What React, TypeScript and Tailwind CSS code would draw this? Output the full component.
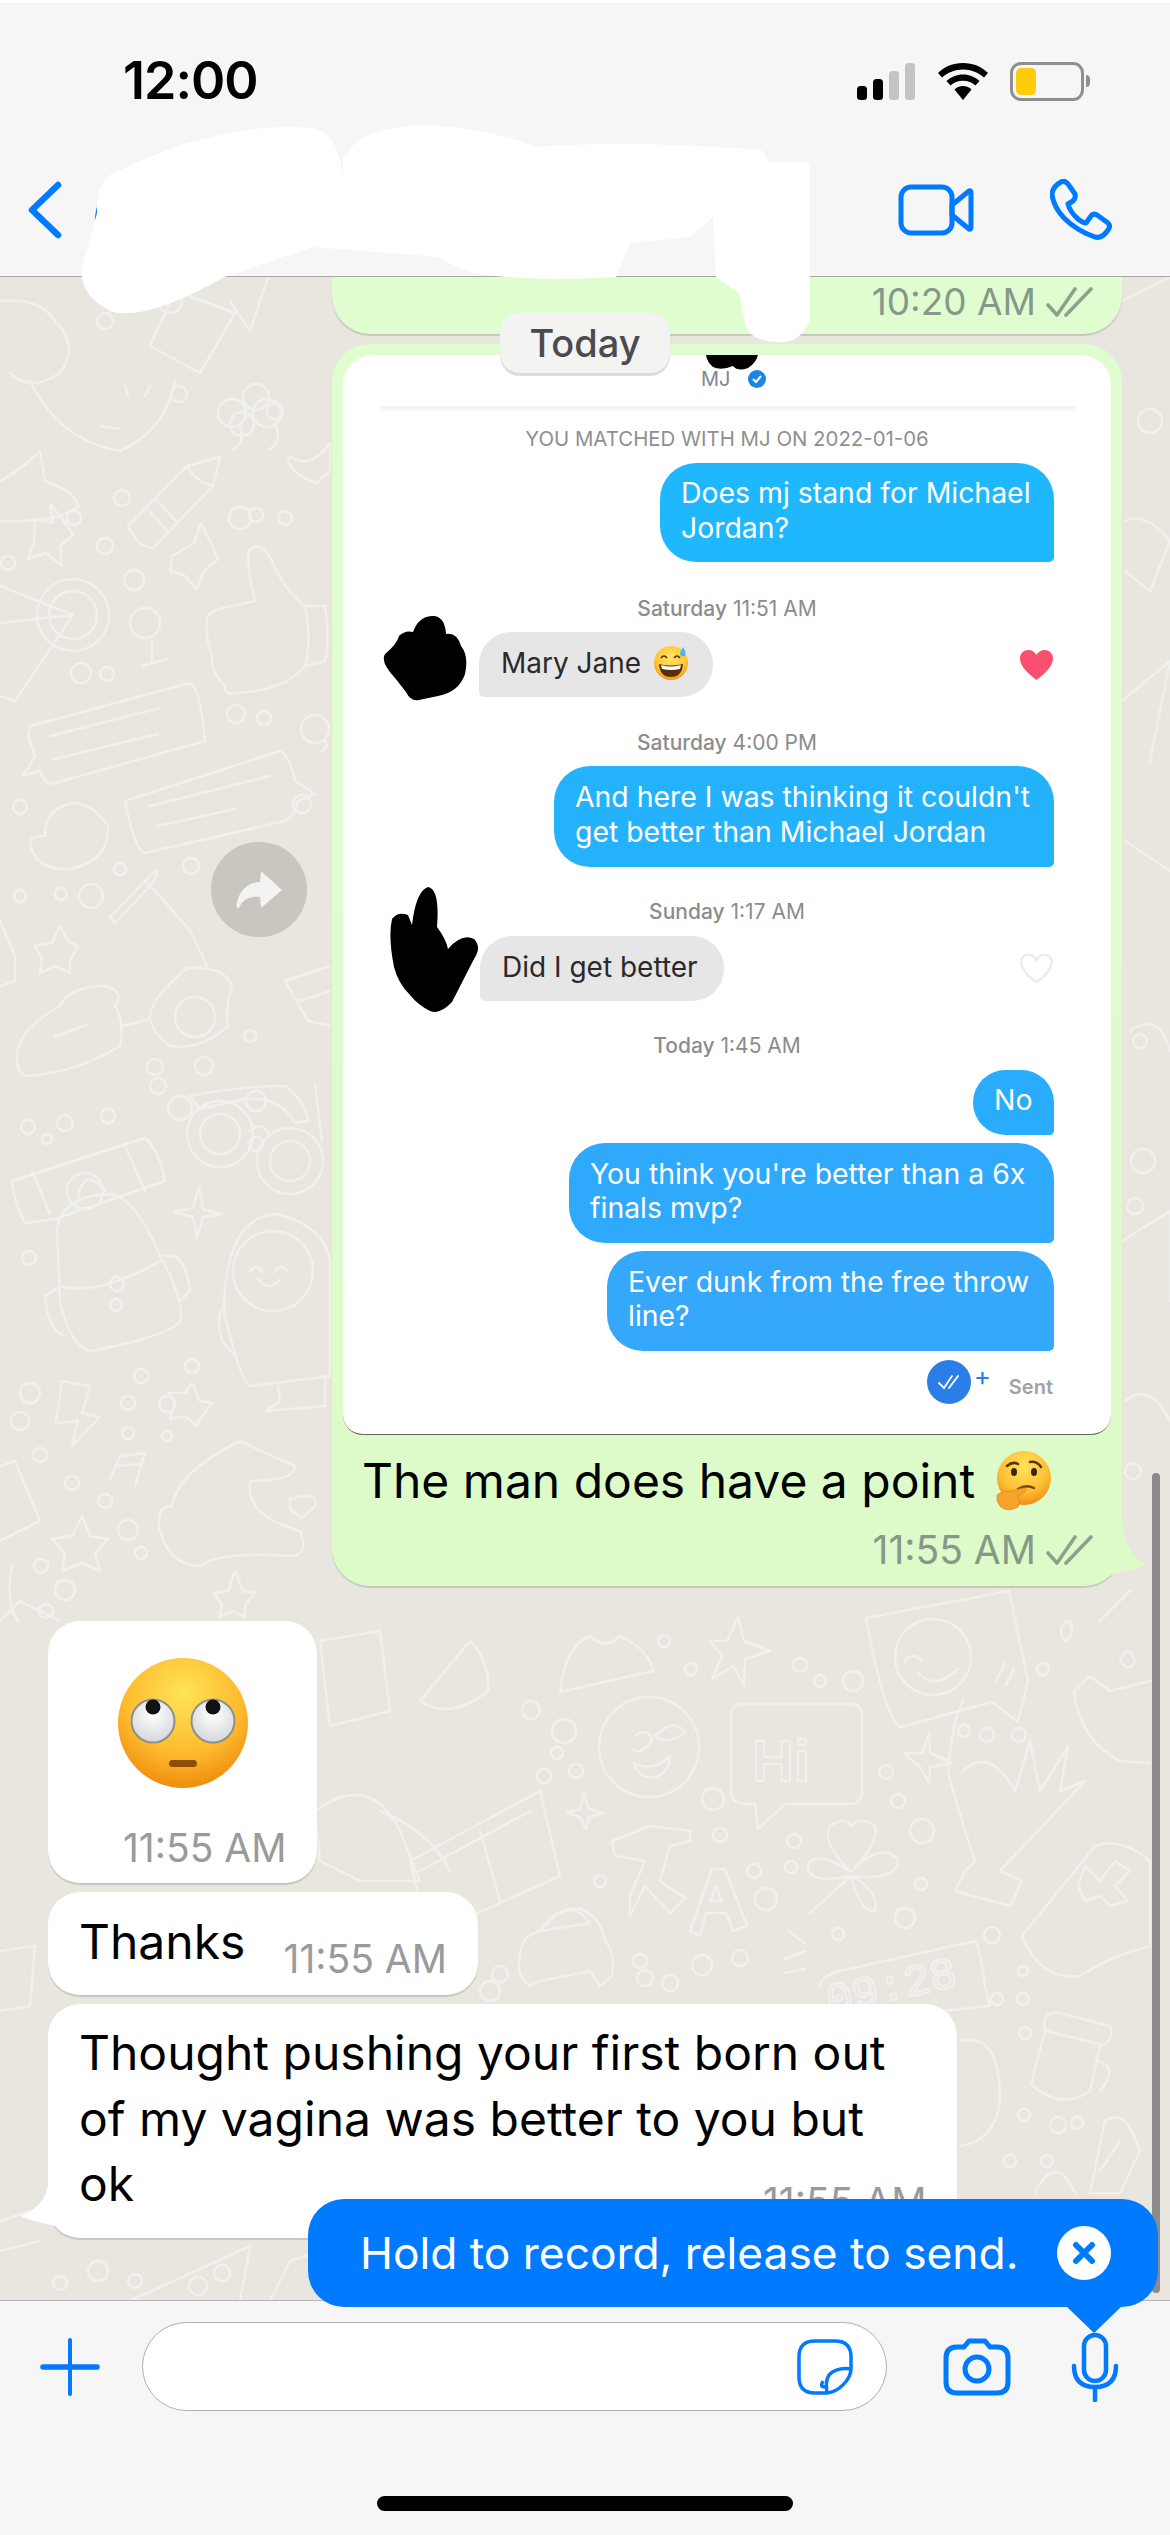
import React from "react";

const BLUE = "#007aff";

const circles: [number, number, number][] = [
  [105, 320, 8], [170, 300, 12], [256, 396, 13], [179, 393, 8], [242, 423, 12], [275, 410, 8], [122, 497, 8], [105, 545, 8],
  [74, 517, 7], [8, 562, 7], [134, 579, 10], [256, 514, 7], [240, 517, 11], [285, 517, 7], [81, 672, 10], [107, 673, 7], [236, 713, 9],
  [264, 717, 7], [302, 803, 9], [20, 806, 7], [120, 868, 6], [191, 865, 8], [61, 893, 6], [91, 895, 12], [20, 895, 6],
  [204, 1065, 9], [256, 1100, 10], [256, 1143, 7], [250, 1035, 6], [180, 1107, 12], [155, 1066, 8],
  [65, 1122, 8], [108, 1115, 7], [158, 1085, 8], [28, 1126, 7], [47, 1138, 5], [29, 1257, 7], [117, 1283, 7], [116, 1304, 6],
  [141, 1375, 7], [192, 1365, 7], [128, 1402, 7], [167, 1403, 8], [30, 1392, 10], [20, 1420, 9], [40, 1454, 7],
  [72, 1482, 7], [128, 1432, 6], [167, 1435, 5], [128, 1529, 10], [141, 1552, 6], [41, 1565, 7], [65, 1589, 10], [46, 1610, 7], [105, 1500, 7],
  [664, 1640, 6], [691, 1668, 6], [800, 1664, 7], [820, 1680, 6], [853, 1680, 10], [531, 1709, 9], [564, 1730, 12], [557, 1752, 6], [576, 1770, 7],
  [544, 1775, 7], [713, 1798, 11], [720, 1834, 7], [794, 1840, 7], [754, 1870, 7], [791, 1866, 6], [766, 1898, 11], [600, 1880, 6],
  [1043, 1668, 6], [1019, 1734, 7], [964, 1730, 6], [987, 1734, 7], [886, 1771, 7], [898, 1800, 7], [922, 1830, 12], [921, 1883, 6], [905, 1917, 10],
  [838, 1933, 6], [992, 1934, 8], [1023, 1970, 5], [997, 1998, 6], [1023, 1998, 6], [1025, 2032, 6], [1024, 2114, 6], [1058, 2124, 8], [1077, 2122, 6],
  [1010, 2160, 6], [1047, 2160, 6], [500, 1973, 8], [640, 1960, 7], [645, 1977, 8], [670, 1982, 8], [702, 1964, 10], [740, 1957, 8], [490, 1990, 10],
  [60, 2282, 7], [98, 2270, 10], [135, 2280, 7], [198, 2285, 9], [222, 2272, 8],
  [1150, 420, 12], [1140, 1040, 7], [1135, 1205, 8], [1143, 1160, 12], [1133, 1470, 8],
  [195, 1016, 20], [232, 412, 14], [267, 412, 14], [315, 728, 14],
];

const doodlePaths = [
  // left column, top to bottom
  "M0 300 Q40 296 55 320 Q80 345 60 372 Q30 392 10 372 M175 290 L235 312 L200 372 L150 345Z M250 330 L268 276 M250 330 L230 300",
  "M30 380 Q60 440 120 450 Q165 430 175 380 M100 425 L120 428 M125 385 L128 395 M145 395 L150 385",
  "M0 480 Q20 470 40 450 L45 480 Q75 490 78 505 Q60 522 0 520",
  "M290 455 Q310 470 330 442 L330 470 L316 482 Q295 475 288 460Z M240 425 Q246 440 234 448 M276 425 Q282 440 270 448 M325 740 Q330 745 322 750",
  "M128 525 L187 465 L220 456 L213 485 L153 547 Q140 548 128 525Z M146 506 L168 531 M155 498 L178 522 M187 465 Q195 480 213 485",
  "M35 518 L53 522 L50 503 L62 517 L73 534 L60 545 L62 565 L46 552 L28 558 L34 541Z",
  "M172 555 L194 542 L201 522 L211 542 L218 558 L204 570 L197 588 L184 574 L170 570Z",
  "M207 620 Q205 610 232 605 L255 600 Q245 560 250 548 Q262 540 272 560 Q285 590 305 605 L325 605 Q330 640 325 660 L305 665 Q285 690 235 692 Q225 695 225 685 Q210 670 212 655 Q205 635 207 620Z M305 605 Q312 640 305 665",
  "M0 585 L73 614 L15 700 L0 695 M0 622 L73 614",
  "M152 640 L152 660 M143 665 L167 658",
  "M30 725 L190 682 Q200 685 205 740 L55 782 Q45 785 40 770 L23 775 L35 755 L28 735Z M50 735 L160 707 M54 758 L158 733",
  "M125 800 L280 750 Q290 755 295 780 L315 793 L298 800 Q295 815 285 820 L145 852 Q135 850 125 800Z M150 805 L270 775 M158 825 L235 808",
  "M45 835 Q45 805 75 802 Q95 805 108 825 Q110 860 70 868 Q35 870 30 842 Q30 835 45 835Z",
  "M60 925 L68 940 L78 945 L70 960 L70 972 L55 965 L40 972 L42 958 L35 945 L52 942Z",
  "M0 920 L15 955 L15 980 L0 985",
  "M110 916 L155 870 Q160 875 150 885 L115 922 Z M145 880 Q170 905 190 930 L207 965",
  "M17 1058 Q15 1030 60 1005 Q70 985 105 985 Q125 990 115 1005 Q125 1020 120 1045 Q80 1070 30 1075 Q17 1075 17 1058Z M55 1036 L88 1023 M123 1025 L150 1018",
  "M150 1018 Q148 1000 187 967 Q225 965 232 985 Q225 1005 228 1025 Q200 1050 170 1045 Q155 1035 150 1018Z",
  "M285 980 L330 965 M285 980 L308 1020 L330 1025 M300 1000 L330 990",
  // glasses, bags
  "M190 1095 Q240 1085 285 1085 Q305 1100 308 1120 L295 1122 Q280 1095 245 1098 L200 1108Z M250 1130 Q262 1118 270 1135 M315 1085 L322 1140",
  "M12 1180 L145 1137 Q160 1150 165 1180 L55 1218 L25 1222 Q15 1205 12 1180Z M32 1170 L50 1213 M125 1145 L145 1190",
  "M57 1230 Q60 1195 110 1193 Q135 1195 160 1255 Q185 1300 180 1320 Q170 1335 90 1350 Q70 1345 60 1300 Z M60 1285 Q100 1295 160 1260 M60 1285 L45 1295 Q48 1330 65 1335 M165 1255 Q185 1250 190 1290 L180 1300 M78 1195 Q85 1165 105 1190",
  "M199 1185 L203 1208 L222 1213 L203 1216 L197 1237 L193 1216 L174 1211 L193 1207Z",
  "M224 1310 Q225 1215 277 1213 Q325 1225 330 1260 L330 1375 L250 1385 Q240 1380 224 1310Z M225 1305 Q215 1310 222 1340 L235 1355 M250 1270 Q256 1262 262 1270 M275 1270 Q281 1262 288 1270 M258 1278 Q270 1292 280 1278 M278 1385 L280 1400 L266 1410 L325 1405 L325 1375",
  "M62 1380 L90 1385 L82 1412 L100 1416 L72 1445 L78 1420 L56 1422Z",
  "M192 1382 L200 1400 L212 1402 L200 1418 L197 1425 L185 1415 L170 1418 L175 1400 L168 1392 L185 1392Z",
  "M120 1455 L145 1452 L135 1485 M120 1455 L110 1478 M118 1465 L140 1463",
  "M172 1505 Q178 1470 240 1440 Q265 1452 295 1465 Q295 1480 250 1480 Q245 1515 300 1530 Q310 1555 290 1555 Q220 1550 200 1565 Q170 1565 160 1530 Q155 1505 172 1505Z",
  "M290 1498 Q302 1495 304 1495 Q318 1495 315 1505 L302 1517 L290 1508Z",
  "M0 1465 L15 1460 L40 1520 L0 1540",
  "M82 1515 L90 1535 L108 1538 L95 1552 L100 1570 L82 1562 L62 1570 L65 1552 L52 1538 L72 1535Z",
  "M12 1565 Q5 1600 18 1620",
  "M235 1570 L243 1590 L255 1592 L245 1604 L245 1616 L233 1610 L220 1616 L222 1604 L214 1592 L228 1590Z",
  // bottom area left
  "M0 1620 L20 1600 L60 1620 M0 1950 L35 1945 L30 2005 L0 2010 M0 2220 L30 2210 M0 2250 L40 2240 M130 2300 L250 2245 L240 2300",
  "M270 2300 L290 2260 L320 2250",
  "M320 1640 L380 1630 L390 1710 L330 1725Z M315 1810 Q370 1770 400 1830 L420 1880 L360 1880 L320 1860Z",
  "M420 1700 L470 1640 Q490 1660 488 1690 Q450 1720 420 1700 M380 1810 Q430 1830 450 1870",
  // map
  "M410 1860 L540 1790 L560 1875 L460 1920 L420 1900Z M480 1830 L500 1900 M420 1870 L530 1810",
  // bottom-right field
  "M560 1691 Q565 1645 590 1635 Q605 1650 620 1635 Q650 1650 653 1670Z",
  "M710 1640 L727 1640 L738 1616 L744 1640 L770 1650 L745 1658 L744 1684 L733 1665 L712 1678 L722 1655Z",
  "M866 1617 L1009 1590 L1028 1680 L1018 1721 L992 1701 L901 1726 Q885 1720 866 1617Z M905 1660 Q912 1650 922 1660 M918 1672 Q935 1690 958 1668 M996 1680 L1005 1662 M1006 1684 L1014 1668",
  "M635 1735 Q650 1725 652 1740 Q640 1755 632 1748 M655 1735 Q675 1715 685 1732 Q665 1745 655 1735 M634 1762 Q652 1772 670 1755 Q668 1778 648 1776 Q638 1775 634 1762Z",
  "M745 1703 L850 1703 Q862 1703 862 1715 L862 1790 Q862 1803 850 1803 L785 1803 L758 1828 L755 1803 L745 1803 Q731 1803 731 1790 L731 1715 Q731 1703 745 1703Z",
  "M584 1792 L589 1808 L604 1812 L589 1816 L586 1828 L580 1816 L567 1812 L580 1808Z",
  "M929 1732 L930 1752 L952 1762 L930 1766 L929 1782 L920 1766 L904 1752 L922 1752Z",
  "M851 1871 Q820 1840 830 1825 Q845 1815 851 1825 Q860 1815 875 1825 Q880 1840 851 1871 Q880 1840 898 1858 Q900 1880 851 1875 Q880 1890 875 1910 Q860 1912 851 1875 M851 1871 Q820 1850 808 1862 Q805 1885 851 1875 L810 1912",
  "M612 1840 L650 1825 L690 1830 L690 1840 L670 1845 L660 1880 L685 1897 L670 1912 L645 1885 L630 1915 L630 1895 L645 1860 L615 1855Z",
  "M690 1930 L712 1868 L725 1868 L747 1925 L733 1930 L726 1912 L706 1912 L700 1935Z M710 1900 L722 1900 L716 1885Z",
  "M520 1955 Q520 1935 540 1930 Q555 1905 580 1908 Q600 1915 605 1940 Q615 1950 612 1975 L600 1985 L590 1970 L540 1980 L530 1985 Q515 1975 520 1955Z M540 1930 L590 1922 M545 1925 Q570 1895 590 1922",
  "M788 1930 L805 1942 M785 1958 L805 1950 M785 1972 L805 1968",
  "M820 1985 Q820 1975 840 1970 L975 1940 Q980 1945 985 1985 L990 2005 L850 2020",
  "M963 1700 Q952 1720 948 1770 Q955 1800 975 1860 L965 1870 L955 1890 L1010 1905 L1022 1880 L1000 1870 L1085 1780 L1060 1790 L1068 1745 L1040 1790 L1030 1740 L1015 1790 Q990 1745 963 1770",
  "M1022 1935 L1095 1845 Q1120 1835 1150 1860 L1150 1945 Q1110 1955 1080 1975 Q1040 1980 1022 1935Z M1085 1865 L1100 1880 L1115 1860 L1130 1870 L1115 1885 L1128 1900 L1110 1905 L1100 1895 L1085 1900 L1078 1885Z",
  "M1074 1690 L1090 1675 L1110 1690 L1150 1680 M1074 1690 Q1080 1740 1120 1760 L1150 1762",
  "M1031 2083 L1045 2030 Q1040 2010 1060 2012 L1110 2025 Q1115 2040 1100 2045 L1090 2090 Q1060 2110 1031 2083Z M1047 2030 L1102 2044 M1097 2060 Q1120 2065 1100 2090",
  "M960 2040 Q1000 2030 1000 2100 Q995 2140 960 2145",
  "M1090 2192 L1105 2120 Q1125 2105 1140 2150 L1120 2192Z M1100 2170 L1120 2140",
  "M1035 2192 Q1055 2150 1075 2192 M980 2290 Q1000 2240 1020 2270",
  "M1100 1620 L1130 1590 M1120 1660 Q1128 1640 1135 1660 Q1130 1672 1120 1660Z M1065 1640 Q1055 1625 1070 1620 Q1075 1635 1065 1640Z",
  "M1122 300 L1170 276 M1125 520 Q1145 510 1170 540 L1150 590 L1125 570 M1122 700 L1170 660 L1150 760 M1125 840 L1170 870 M1130 1030 Q1160 1010 1170 1050 M1122 1240 L1170 1210 L1170 1300 M1125 1400 Q1150 1380 1170 1420",
];

function Doodles() {
  return (
    <svg viewBox="0 276 1170 2024" className="absolute left-0 top-0 h-[2024px] w-[1170px]" fill="none" stroke="#f2f0ec" strokeWidth="2.5" strokeLinecap="round" strokeLinejoin="round">
      {doodlePaths.map((d, i) => <path key={i} d={d} />)}
      {circles.map(([cx, cy, r], i) => <circle key={i} cx={cx} cy={cy} r={r} />)}
      <circle cx="73" cy="614" r="36" />
      <circle cx="73" cy="614" r="24" />
      <circle cx="145" cy="622" r="15" />
      <circle cx="220" cy="1133" r="33" /><circle cx="220" cy="1133" r="20" />
      <circle cx="290" cy="1160" r="33" /><circle cx="290" cy="1160" r="20" />
      <circle cx="933" cy="1656" r="38" />
      <circle cx="649" cy="1746" r="50" />
      <circle cx="273" cy="1270" r="40" />
      <circle cx="85" cy="1190" r="18" />
      <text x="752" y="1780" fontFamily="Liberation Sans, sans-serif" fontWeight="700" fontSize="58" strokeWidth="2">Hi</text>
      <text x="830" y="2014" fontFamily="Liberation Mono, monospace" fontSize="44" strokeWidth="2" transform="rotate(-13 830 2014)">09:28</text>
    </svg>
  );
}

function Signal() {
  return (
    <svg width="59" height="37" viewBox="0 0 59 37">
      <rect x="0" y="23" width="10" height="14" rx="3.5" fill="#000" />
      <rect x="16" y="16" width="10" height="21" rx="3.5" fill="#000" />
      <rect x="32" y="8" width="10" height="29" rx="3.5" fill="#c4c4c4" />
      <rect x="48" y="0" width="10" height="37" rx="3.5" fill="#c4c4c4" />
    </svg>
  );
}

function Wifi() {
  return (
    <svg width="50" height="37" viewBox="0 0 50 37">
      <path d="M25 0C15 0 6.500 3.500 0 10L4 14.500C9.500 9.500 17 6.500 25 6.500C33 6.500 40.500 9.500 46 14.500L50 10C43.500 3.500 35 0 25 0Z" fill="#000" />
      <path d="M25 11.500C18.500 11.500 13 14 8.500 18L12.500 22.500C15.800 19.500 20 17.800 25 17.800C30 17.800 34.200 19.500 37.500 22.500L41.500 18C37 14 31.500 11.500 25 11.500Z" fill="#000" />
      <path d="M25 23C21.500 23 18.500 24.300 16.500 26.500L25 37L33.500 26.500C31.500 24.300 28.500 23 25 23Z" fill="#000" />
    </svg>
  );
}

function Battery() {
  return (
    <div className="flex items-center">
      <div className="flex h-[39px] w-[74px] items-center rounded-[11px] border-[3px] border-[#8f8f8f] pl-[3px]">
        <div className="h-[27px] w-[20px] rounded-[5px] bg-[#ffcc0a]" />
      </div>
      <div className="ml-[2px] h-[12px] w-[4px] rounded-r-full bg-[#8f8f8f]" />
    </div>
  );
}

function CheckMarks({ color = "#8ea28b" }: { color?: string }) {
  return (
    <svg width="47" height="32" viewBox="0 0 47 32" fill="none" stroke={color} strokeWidth="3.600" strokeLinecap="round" strokeLinejoin="round">
      <path d="M2 19L11 29L29 3" />
      <path d="M20 29L45 3" />
    </svg>
  );
}

function Tail({ side }: { side: "left" | "right" }) {
  if (side === "right") {
    return (
      <svg className="absolute bottom-[8px] left-[768px] h-[60px] w-[50px]" viewBox="0 0 50 60">
        <path d="M0 0L22 0C24 22 30 40 47 47C35 52 20 52 6 60L0 60Z" fill="#dcfbc8" />
      </svg>
    );
  }
  return (
    <svg className="absolute bottom-[10px] left-[-27px] h-[56px] w-[40px]" viewBox="0 0 40 56">
      <path d="M40 0L28 0C28 25 20 35 0 44C10 50 22 50 40 56Z" fill="#fff" />
    </svg>
  );
}

function SweatSmile() {
  return (
    <svg width="34" height="34" viewBox="0 0 34 34">
      <defs>
        <radialGradient id="ss" cx="50%" cy="35%" r="65%">
          <stop offset="0%" stopColor="#ffe766" />
          <stop offset="70%" stopColor="#fdc433" />
          <stop offset="100%" stopColor="#ef9a12" />
        </radialGradient>
      </defs>
      <circle cx="17" cy="17" r="17" fill="url(#ss)" />
      <path d="M7 12Q10 8 13 12M20 12Q23 8 26 12" fill="none" stroke="#5a3410" strokeWidth="1.700" />
      <path d="M5 18Q17 21 29 18Q28 31 17 31Q6 31 5 18Z" fill="#5a2c0c" />
      <path d="M7 19Q17 22 27 19L26 23Q17 25 8 23Z" fill="#fff" />
      <path d="M29 1Q33 7 31 10Q28 11 26 9Q26 6 29 1Z" fill="#4fb4ef" />
    </svg>
  );
}

function Thinking() {
  return (
    <svg width="60" height="60" viewBox="0 0 60 60">
      <defs>
        <radialGradient id="th" cx="50%" cy="30%" r="70%">
          <stop offset="0%" stopColor="#ffe35c" />
          <stop offset="65%" stopColor="#fdbf33" />
          <stop offset="100%" stopColor="#ef8f13" />
        </radialGradient>
      </defs>
      <circle cx="31" cy="27" r="27" fill="url(#th)" />
      <path d="M14 15Q20 10 25 13M37 11Q44 10 48 16" fill="none" stroke="#5a3410" strokeWidth="2.500" strokeLinecap="round" />
      <ellipse cx="21" cy="21" rx="3" ry="4" fill="#3d2410" />
      <ellipse cx="41" cy="21" rx="3" ry="4" fill="#3d2410" />
      <path d="M25 38Q33 33 41 37" fill="none" stroke="#7a4512" strokeWidth="2.500" strokeLinecap="round" />
      <path d="M4 44Q10 39 18 40L31 37Q35 38 32 41L25 45Q28 50 25 56Q14 62 7 55Q3 50 4 44Z" fill="#f7a22b" stroke="#e2861a" strokeWidth="0.800" />
    </svg>
  );
}

function RollingEyes() {
  return (
    <svg width="130" height="132" viewBox="0 0 130 132">
      <defs>
        <radialGradient id="re" cx="50%" cy="28%" r="72%">
          <stop offset="0%" stopColor="#ffe455" />
          <stop offset="65%" stopColor="#fdb92e" />
          <stop offset="100%" stopColor="#ee8d0d" />
        </radialGradient>
        <radialGradient id="eye" cx="50%" cy="35%" r="60%">
          <stop offset="0%" stopColor="#fff" />
          <stop offset="100%" stopColor="#d9dade" />
        </radialGradient>
      </defs>
      <circle cx="65" cy="66" r="65" fill="url(#re)" />
      <circle cx="35" cy="64" r="21.500" fill="url(#eye)" stroke="#8d8f8f" strokeWidth="2" />
      <circle cx="95" cy="64" r="21.500" fill="url(#eye)" stroke="#8d8f8f" strokeWidth="2" />
      <circle cx="35" cy="50" r="7.500" fill="#111" />
      <circle cx="95" cy="50" r="7.500" fill="#111" />
      <rect x="51" y="103" width="28" height="7" rx="3.500" fill="#8a4f05" />
    </svg>
  );
}

function TinderBubble({ children, width, height, color }: { children: React.ReactNode; width: string; height: string; color: string }) {
  return (
    <div className={`${width} ${height} ${color} self-end mr-[57px] flex flex-col justify-center rounded-[36px] rounded-br-[5px] pb-[4px] pl-[21px] text-[28.400px] leading-[34.500px] text-white`}>
      {children}
    </div>
  );
}

function Stamp({ children, mt }: { children: React.ReactNode; mt: string }) {
  return <div className={`${mt} h-[22px] text-center text-[21px] leading-[22px] text-[#8c8c8c]`}>{children}</div>;
}

function TinderShot() {
  return (
    <div className="relative mx-[11px] mt-[11px] flex h-[1080px] flex-col overflow-hidden rounded-t-[30px] rounded-b-[20px] border-b border-[#666] bg-white">
      <svg className="absolute left-[363px] top-0 h-[17px] w-[52px]" viewBox="0 0 52 17">
        <path d="M0 0L52 0Q50 8 42 13Q32 17 27 11Q15 16 7 12Q1 7 0 0Z" fill="#000" />
      </svg>
      <div className="mt-[14px] flex h-[20px] items-center pl-[358px] text-[20px] leading-[20px] text-[#858585]">
        MJ
        <svg className="ml-[18px]" width="18" height="18" viewBox="0 0 18 18">
          <circle cx="9" cy="9" r="9" fill="#1a86e4" />
          <path d="M5 9L8 12L13 6" fill="none" stroke="#fff" strokeWidth="2" />
        </svg>
      </div>
      <div className="mx-[36px] mt-[17px] h-[7px] bg-gradient-to-b from-[#f0f0f0] to-white" />
      <div className="mt-[14px] h-[24px] text-center text-[20.400px] leading-[24px] text-[#8f8f8f]">YOU MATCHED WITH MJ ON 2022-01-06</div>

      <div className="mt-[12px] flex flex-col">
        <TinderBubble width="w-[394px]" height="h-[99px]" color="bg-[#1fb8fe]">
          <span>Does mj stand for Michael</span>
          <span>Jordan?</span>
        </TinderBubble>
      </div>
      <Stamp mt="mt-[36px]"><b className="font-medium">Saturday</b> 11:51 AM</Stamp>
      <div className="relative mt-[12px] flex h-[65px] items-center pl-[136px] pr-[58px]">
        <svg className="absolute left-[40px] top-[-16px] h-[85px] w-[85px]" viewBox="0 0 85 85">
          <path d="M52 0Q62 2 63 18Q74 16 78 30Q86 40 82 58Q76 76 55 80L36 84Q28 86 23 76L12 62Q-3 46 2 38Q14 28 16 20Q22 14 30 16Q36 -1 52 0Z" fill="#000" />
        </svg>
        <div className="flex h-[65px] w-[234px] items-center gap-[13px] rounded-[32px] rounded-bl-[5px] bg-[#e6e6e6] pb-[4px] pl-[22px] text-[28px] text-[#2a2a2a]">
          Mary Jane
          <SweatSmile />
        </div>
        <svg className="ml-auto" width="33" height="30" viewBox="0 0 33 30">
          <path d="M16.500 30C10 25 0 17 0 8.500C0 3 4 0 8.500 0C12 0 15 2 16.500 5C18 2 21 0 24.500 0C29 0 33 3 33 8.500C33 17 23 25 16.500 30Z" fill="#f9506f" />
        </svg>
      </div>
      <Stamp mt="mt-[35px]"><b className="font-medium">Saturday</b> 4:00 PM</Stamp>
      <div className="mt-[12px] flex flex-col">
        <TinderBubble width="w-[500px]" height="h-[101px]" color="bg-[#25b2fd]">
          <span>And here I was thinking it couldn't</span>
          <span>get better than Michael Jordan</span>
        </TinderBubble>
      </div>
      <Stamp mt="mt-[34px]"><b className="font-medium">Sunday</b> 1:17 AM</Stamp>
      <div className="relative mt-[13px] flex h-[65px] items-center pl-[137px] pr-[58px]">
        <svg className="absolute left-[47px] top-[-49px] h-[126px] w-[89px]" viewBox="0 0 89 126">
          <path d="M38 0Q50 2 47 40Q56 52 58 62Q72 46 84 52Q92 60 84 72L62 115Q50 128 40 124Q28 118 20 108Q8 96 4 80Q-2 50 2 32Q8 24 18 28L22 38Q26 4 38 0Z" fill="#000" />
        </svg>
        <div className="flex h-[65px] w-[244px] items-center rounded-[32px] rounded-bl-[5px] bg-[#e6e6e6] pb-[4px] pl-[22px] text-[28px] text-[#2a2a2a]">Did I get better</div>
        <svg className="ml-auto" width="33" height="31" viewBox="0 0 33 30">
          <path d="M16.500 28.500C10 24 1.200 17 1.200 8.500C1.200 4 4.500 1.200 8.500 1.200C12 1.200 15 3 16.500 6.500C18 3 21 1.200 24.500 1.200C28.500 1.200 31.800 4 31.800 8.500C31.800 17 23 24 16.500 28.500Z" fill="none" stroke="#ececec" strokeWidth="2.400" />
        </svg>
      </div>
      <Stamp mt="mt-[34px]"><b className="font-medium">Today</b> 1:45 AM</Stamp>
      <div className="mt-[13px] flex flex-col gap-[8px]">
        <TinderBubble width="w-[81px]" height="h-[65px]" color="bg-[#28acfb]">
          <span>No</span>
        </TinderBubble>
        <TinderBubble width="w-[485px]" height="h-[100px]" color="bg-[#2ea9fb]">
          <span>You think you're better than a 6x</span>
          <span>finals mvp?</span>
        </TinderBubble>
        <TinderBubble width="w-[447px]" height="h-[100px]" color="bg-[#35a8fc]">
          <span>Ever dunk from the free throw</span>
          <span>line?</span>
        </TinderBubble>
      </div>
      <div className="mt-[9px] flex h-[44px] items-start justify-end pr-[58px]">
        <div className="flex h-[44px] w-[44px] items-center justify-center rounded-full bg-[#2b7de8]">
          <svg width="22" height="16" viewBox="0 0 22 16" fill="none" stroke="#fff" strokeWidth="1.800" strokeLinecap="round">
            <path d="M1 9L6 14L14 2M11 14L20 2" />
          </svg>
        </div>
        <div className="ml-[3px] mt-[3px] text-[26px] leading-[26px] text-[#2b7de8]">+</div>
        <div className="ml-[18px] mt-[15px] text-[20px] font-semibold leading-[24px] text-[#a2a2a2]">Sent</div>
      </div>
    </div>
  );
}

function WhiteBubble({ children, className }: { children: React.ReactNode; className: string }) {
  return <div className={`ml-[48px] rounded-[32px] bg-white shadow-[0_2px_1px_rgba(0,0,0,0.14)] ${className}`}>{children}</div>;
}

export default function App() {
  return (
    <div className="relative flex h-[2535px] w-[1170px] flex-col overflow-hidden bg-[#f6f6f6] font-[Inter,sans-serif]">
      <header className="flex h-[277px] shrink-0 flex-col border-t-[3px] border-b border-t-white border-b-[#a8a8a8] bg-[#f6f6f6]">
        <div className="mt-[48px] flex h-[60px] items-center pl-[123px] pr-[80px]">
          <span className="text-[52px] font-semibold leading-[60px] tracking-[-1px] text-black">12:00</span>
          <div className="ml-auto flex items-center gap-[22px]">
            <Signal />
            <Wifi />
            <Battery />
          </div>
        </div>
        <div className="mt-[66px] flex h-[66px] items-center pl-[28px] pr-[58px]">
          <svg width="34" height="58" viewBox="0 0 34 58" fill="none" stroke={BLUE} strokeWidth="6.500" strokeLinecap="round" strokeLinejoin="round">
            <path d="M30 4L4 29L30 54" />
          </svg>
          <svg className="ml-[30px]" width="20" height="40" viewBox="0 0 20 40" fill="none" stroke={BLUE} strokeWidth="5" strokeLinecap="round">
            <path d="M6 36Q3 20 14 4" />
          </svg>
          <svg className="ml-auto" width="76" height="52" viewBox="0 0 76 52" fill="none" stroke={BLUE} strokeWidth="5" strokeLinejoin="round">
            <rect x="3" y="3" width="51" height="46" rx="10" />
            <path d="M54 21L71 7Q73 6 73 9L73 43Q73 46 71 45L54 31Z" />
          </svg>
          <svg className="ml-[76px]" width="62" height="62" viewBox="0 0 62 62" fill="none" stroke={BLUE} strokeWidth="5" strokeLinejoin="round">
            <path d="M11 3Q15 1 18 5L25 15Q26 19 23 22L18 25Q20 33 28 40Q33 44 36 44L41 37Q43 34 47 36L58 44Q61 47 58 51Q52 60 45 58Q27 52 14 39Q3 27 2 15Q3 7 11 3Z" />
          </svg>
        </div>
      </header>

      <main className="relative h-[2023px] shrink-0 overflow-hidden bg-[#e9e6e0]">
        <Doodles />
        <div className="relative flex flex-col">
          <div className="ml-[332px] flex h-[57px] w-[790px] items-center justify-end gap-[10px] rounded-b-[38px] bg-[#e0fdd0] pb-[8px] pr-[29px] shadow-[0_2px_1px_rgba(0,0,0,0.14)]">
            <span className="text-[37px] leading-[42px] text-[#87988a]">10:20 AM</span>
            <CheckMarks />
          </div>

          <div className="relative ml-[332px] mt-[10px] flex h-[1242px] w-[790px] flex-col rounded-[38px] bg-gradient-to-b from-[#e0fdd0] to-[#dcfbc8] shadow-[0_2px_1px_rgba(0,0,0,0.14)]">
            <TinderShot />
            <div className="mt-[16px] flex h-[60px] items-center pl-[30px] text-[48px] leading-[60px] text-black">
              The man does have a point
              <span className="ml-[18px]"><Thinking /></span>
            </div>
            <div className="mt-[21px] flex h-[36px] items-center justify-end gap-[10px] pr-[29px]">
              <span className="text-[39px] leading-[42px] text-[#87988a]">11:55 AM</span>
              <CheckMarks />
            </div>
            <Tail side="right" />
          </div>

          <WhiteBubble className="mt-[35px] flex h-[262px] w-[269px] flex-col">
            <div className="mt-[36px] pl-[70px]"><RollingEyes /></div>
            <div className="mt-[41px] pl-[75px] text-[39px] leading-[36px] text-[#9a9a9a]">11:55 AM</div>
          </WhiteBubble>
          <WhiteBubble className="relative mt-[9px] h-[103px] w-[430px]">
            <div className="flex h-[103px] items-start pl-[31px]">
              <span className="mt-[20px] text-[48px] leading-[60px] text-black">Thanks</span>
              <span className="ml-auto mr-[31px] mt-[49px] text-[39px] leading-[36px] text-[#9a9a9a]">11:55 AM</span>
            </div>
          </WhiteBubble>
          <WhiteBubble className="relative mt-[9px] h-[234px] w-[909px] pl-[31px] pt-[16px]">
            <p className="text-[48px] leading-[65.500px] text-black">
              Thought pushing your first born out
              <br />
              of my vagina was better to you but
              <br />
              ok
            </p>
            <span className="absolute left-[715px] top-[180px] text-[39px] leading-[36px] text-[#9a9a9a]">11:55 AM</span>
            <Tail side="left" />
          </WhiteBubble>
        </div>

        <div className="absolute left-[500px] top-[36px] flex h-[60px] w-[170px] items-center justify-center rounded-[20px] bg-[#f3f3f2] text-[38px] font-medium text-[#4a4a4f] shadow-[0_3px_1px_rgba(0,0,0,0.14)]">
          Today
        </div>
        <div className="absolute left-[211px] top-[565px] flex h-[95px] w-[96px] items-center justify-center rounded-full bg-[#c9c5bf]">
          <svg width="46" height="38" viewBox="0 0 46 38">
            <path d="M25 0L46 19L25 37L24 26C14 25 6 29 3 37C0 38 0 35 1 31C4 19 13 11 24 11Z" fill="#f4f3f1" />
          </svg>
        </div>
        <div className="absolute left-[1152px] top-[1196px] h-[820px] w-[8px] rounded-full bg-[#8b8b8b]" />
      </main>

      <footer className="flex flex-1 flex-col border-t border-[#b4b4b4]">
        <div className="mt-[21px] flex h-[89px] items-center pl-[40px]">
          <svg width="60" height="60" viewBox="0 0 60 60" stroke={BLUE} strokeLinecap="round">
            <path d="M3 30L57 30" strokeWidth="5.500" />
            <path d="M30 3L30 57" strokeWidth="4" />
          </svg>
          <div className="ml-[42px] flex h-[89px] w-[745px] items-center justify-end rounded-full border border-[#b0b0b0] bg-white pr-[33px]">
            <svg width="56" height="56" viewBox="0 0 56 56" fill="none" stroke={BLUE} strokeWidth="3.500" strokeLinejoin="round">
              <path d="M18 2L38 2Q54 2 54 18L54 30C54 40 42 53 30 54L18 54Q2 54 2 38L2 18Q2 2 18 2Z" />
              <path d="M54 30Q40 28 32 36Q28 42 30 54M30 47Q22 50 26 42" />
            </svg>
          </div>
          <svg className="ml-[56px]" width="68" height="58" viewBox="0 0 68 58" fill="none" stroke={BLUE} strokeWidth="5" strokeLinejoin="round">
            <path d="M14 9L21 9L26 3L42 3L47 9L54 9Q65 9 65 20L65 44Q65 55 54 55L14 55Q3 55 3 44L3 20Q3 9 14 9Z" />
            <circle cx="34" cy="31" r="12" />
          </svg>
          <svg className="ml-[60px]" width="48" height="70" viewBox="0 0 48 70" fill="none" stroke={BLUE} strokeWidth="4.500" strokeLinecap="round">
            <rect x="13" y="3" width="22" height="46" rx="11" />
            <path d="M3 34Q3 55 24 55Q45 55 45 34M24 55L24 68" />
          </svg>
        </div>
        <div className="mt-[85px] h-[15px] w-[416px] self-center rounded-full bg-black" />
      </footer>

      <div className="absolute left-[308px] top-[2199px] flex h-[108px] w-[850px] items-center rounded-[36px] bg-[#007aff] pl-[52px] text-white">
        <span className="text-[44.300px] leading-[54px]">Hold to record, release to send.</span>
        <div className="ml-auto mr-[47px] flex h-[54px] w-[54px] items-center justify-center rounded-full bg-white">
          <svg width="24" height="24" viewBox="0 0 24 24" stroke="#007aff" strokeWidth="6" strokeLinecap="round">
            <path d="M4 4L20 20M20 4L4 20" />
          </svg>
        </div>
        <svg className="absolute left-[758px] top-[107px] h-[27px] w-[56px]" viewBox="0 0 56 27">
          <path d="M0 0L56 0L28 27Z" fill="#007aff" />
        </svg>
      </div>

      <svg className="absolute left-0 top-0 h-[360px] w-[830px]" viewBox="0 0 830 360">
        <path d="M254 263Q272 258 280 248M694 205L694 220" fill="none" stroke="#666" strokeWidth="1.500" />
        <path d="M313 128Q345 135 343 200L343 157L358 140Q400 120 448 127Q490 130 537 147Q620 140 761 150L769 162L810 162L810 320Q800 345 776 342Q750 340 746 327L739 293L716 277L713 217L690 237L630 243L616 277Q550 282 485 275Q455 270 440 257L313 247Q290 255 224 277Q150 320 112 312Q78 295 82 267L97 213Q95 190 110 175Q220 120 313 128Z" fill="#fff" />
      </svg>
    </div>
  );
}
